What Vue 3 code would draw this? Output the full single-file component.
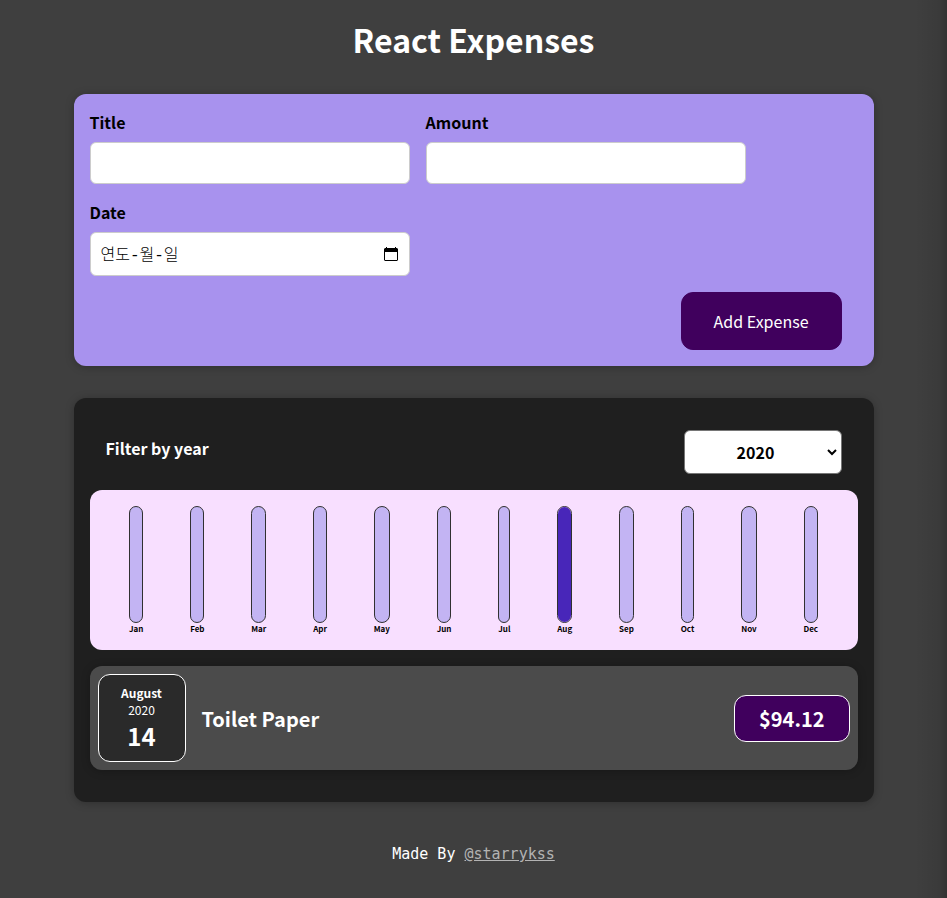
<script setup>
import { ref } from 'vue'

const title = ref('')
const amount = ref('')
const date = ref('')
const dateType = ref('text')
const year = ref('2020')

const years = ['2022', '2021', '2020', '2019']
const months = ['Jan', 'Feb', 'Mar', 'Apr', 'May', 'Jun', 'Jul', 'Aug', 'Sep', 'Oct', 'Nov', 'Dec']
const expenses = ref([
  { id: 1, title: 'Toilet Paper', amount: 94.12, month: 'August', year: '2020', day: 14 }
])

function fill(month) {
  const total = expenses.value.reduce((sum, e) => sum + e.amount, 0)
  const own = expenses.value
    .filter((e) => e.month.startsWith(month))
    .reduce((sum, e) => sum + e.amount, 0)
  return total ? Math.round((own / total) * 100) + '%' : '0%'
}

function resetType() {
  if (!date.value) dateType.value = 'text'
}
</script>

<template>
  <div class="page">
    <h1>React Expenses</h1>

    <form class="card new-expense" @submit.prevent>
      <div class="controls">
        <div class="control">
          <label for="title">Title</label>
          <input id="title" v-model="title" type="text" />
        </div>
        <div class="control">
          <label for="amount">Amount</label>
          <input id="amount" v-model="amount" type="text" inputmode="decimal" />
        </div>
        <div class="control">
          <label for="date">Date</label>
          <div class="date-field">
            <input
              id="date"
              v-model="date"
              class="date-input"
              :type="dateType"
              placeholder="연도-월-일"
              @focus="dateType = 'date'"
              @blur="resetType"
            />
            <svg v-if="dateType === 'text'" class="calendar" viewBox="0 0 14 14" aria-hidden="true">
              <path d="M2 0h1v1h8V0h1v1h1l1 1v11l-1 1H1l-1-1V2l1-1h1zM1 5v8h12V5z" fill="#000" fill-rule="evenodd" />
            </svg>
          </div>
        </div>
      </div>
      <div class="actions">
        <button type="submit">Add Expense</button>
      </div>
    </form>

    <section class="card expenses">
      <div class="filter">
        <label for="year">Filter by year</label>
        <div class="select-wrap">
          <select id="year" v-model="year">
            <option v-for="y in years" :key="y" :value="y">{{ y }}</option>
          </select>
          <svg class="chevron" viewBox="0 0 10 7" aria-hidden="true">
            <path d="M1 1l4 4 4-4" fill="none" stroke="#000" stroke-width="2" />
          </svg>
        </div>
      </div>

      <div class="chart">
        <div v-for="m in months" :key="m" class="month">
          <div class="bar">
            <div class="bar-fill" :style="{ height: fill(m) }"></div>
          </div>
          <span class="month-label">{{ m }}</span>
        </div>
      </div>

      <ul class="list">
        <li v-for="e in expenses" :key="e.id" class="item">
          <div class="date-box">
            <div class="date-month">{{ e.month }}</div>
            <div class="date-year">{{ e.year }}</div>
            <div class="date-day">{{ e.day }}</div>
          </div>
          <h2>{{ e.title }}</h2>
          <div class="price">${{ e.amount }}</div>
        </li>
      </ul>
    </section>

    <footer>Made By <a href="https://github.com/starrykss">@starrykss</a></footer>
  </div>
</template>

<style>
body {
  margin: 0;
  background: #3f3f3f;
}
</style>

<style scoped>
* {
  box-sizing: border-box;
}

.page {
  min-height: 100vh;
  padding: 16px;
  font-family: "Noto Sans CJK KR", "Noto Sans", sans-serif;
  font-size: 16px;
  color: #fff;
  background: linear-gradient(to left, rgba(0, 0, 0, 0.2), rgba(0, 0, 0, 0.08) 8px, rgba(0, 0, 0, 0) 32px);
}

h1 {
  margin: 0 0 32px;
  font-size: 32px;
  line-height: 46px;
  text-align: center;
}

.card {
  max-width: 800px;
  margin: 0 auto 32px;
  padding: 16px;
  border-radius: 12px;
  box-shadow: 0 1px 8px rgba(0, 0, 0, 0.25);
}

.new-expense {
  background: #a892ee;
}

.controls {
  display: flex;
  flex-wrap: wrap;
  gap: 16px;
}

.control {
  width: 320px;
  max-width: 100%;
}

.control label {
  display: block;
  margin-bottom: 8px;
  font-weight: 700;
  line-height: 24px;
  color: #000;
}

.control input {
  display: block;
  width: 100%;
  height: 42px;
  padding: 8px 10px;
  border: 1px solid #ccc;
  border-radius: 6px;
  font: inherit;
  color: #000;
  background: #fff;
}

.date-field {
  position: relative;
}

.control .date-input {
  height: 44px;
  padding-top: 12px;
  font-family: "Liberation Mono", "Noto Sans CJK KR", monospace;
  font-weight: 300;
}

.date-input::placeholder {
  color: #000;
  opacity: 1;
}

.calendar {
  position: absolute;
  top: 15px;
  right: 12px;
  width: 14px;
  height: 14px;
  pointer-events: none;
}

.actions {
  display: flex;
  justify-content: flex-end;
  padding: 16px 16px 0;
}

button {
  padding: 16px 32px;
  border: 1px solid #40005d;
  border-radius: 12px;
  font: inherit;
  line-height: 24px;
  color: #fff;
  background: #40005d;
  cursor: pointer;
}

.expenses {
  padding-bottom: 32px;
  background: #1f1f1f;
}

.filter {
  display: flex;
  justify-content: space-between;
  padding: 16px;
}

.filter label {
  font-weight: 700;
  line-height: 36px;
}

.select-wrap {
  position: relative;
  width: 158px;
}

select {
  appearance: none;
  display: block;
  width: 100%;
  height: 44px;
  padding: 0 14px 0 0;
  border: 1px solid #767676;
  border-radius: 6px;
  font: inherit;
  font-weight: 700;
  text-align: center;
  text-align-last: center;
  color: #000;
  background: #fff;
}

.chevron {
  position: absolute;
  top: 19px;
  right: 5px;
  width: 10px;
  height: 7px;
  pointer-events: none;
}

.chart {
  display: flex;
  justify-content: space-around;
  height: 160px;
  padding: 16px;
  border-radius: 12px;
  background: #f8dfff;
}

.month {
  display: flex;
  flex-direction: column;
}

.bar {
  display: flex;
  flex: 1;
  flex-direction: column;
  justify-content: flex-end;
  overflow: hidden;
  border: 1px solid #313131;
  border-radius: 12px;
  background: #c3b4f3;
}

.bar-fill {
  background: #4826b9;
}

.month-label {
  font-size: 8px;
  font-weight: 700;
  line-height: 11px;
  text-align: center;
  color: #000;
}

.list {
  margin: 16px 0 0;
  padding: 0;
  list-style: none;
}

.item {
  display: flex;
  align-items: center;
  gap: 16px;
  padding: 8px;
  border-radius: 12px;
  background: #4b4b4b;
  box-shadow: 0 1px 8px rgba(0, 0, 0, 0.25);
}

.date-box {
  display: flex;
  flex-direction: column;
  align-items: center;
  justify-content: center;
  width: 88px;
  height: 88px;
  border: 1px solid #fff;
  border-radius: 12px;
  background: #2a2a2a;
}

.date-month {
  font-size: 12px;
  font-weight: 700;
  line-height: 17px;
}

.date-year {
  font-size: 12px;
  line-height: 17px;
}

.date-day {
  font-size: 24px;
  font-weight: 700;
  line-height: 35px;
}

h2 {
  flex: 1;
  margin: 0;
  font-size: 20px;
  line-height: 29px;
}

.price {
  padding: 8px 24px;
  border: 1px solid #fff;
  border-radius: 12px;
  font-size: 20px;
  font-weight: 700;
  line-height: 29px;
  background: #40005d;
}

footer {
  padding: 8px 0;
  font-family: "DejaVu Sans Mono", monospace;
  font-size: 15px;
  line-height: 24px;
  text-align: center;
}

footer a {
  color: #b3b3b3;
}
</style>
